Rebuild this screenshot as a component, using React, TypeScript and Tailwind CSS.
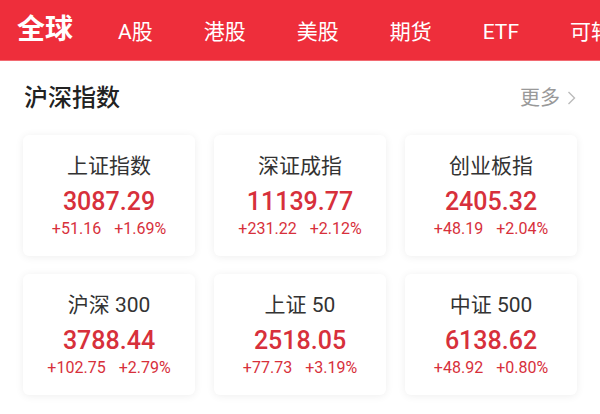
import React from 'react'

interface IIndex {
  name: string
  value: string
  change: string
  percent: string
}

const tabs = ['A股', '港股', '美股', '期货', 'ETF', '可转债']

const indices: IIndex[] = [
  { name: '上证指数', value: '3087.29', change: '+51.16', percent: '+1.69%' },
  { name: '深证成指', value: '11139.77', change: '+231.22', percent: '+2.12%' },
  { name: '创业板指', value: '2405.32', change: '+48.19', percent: '+2.04%' },
  { name: '沪深 300', value: '3788.44', change: '+102.75', percent: '+2.79%' },
  { name: '上证 50', value: '2518.05', change: '+77.73', percent: '+3.19%' },
  { name: '中证 500', value: '6138.62', change: '+48.92', percent: '+0.80%' },
]

const IndexCard: React.FC<{ item: IIndex }> = ({ item }) => (
  <div className="h-[121px] rounded-md bg-white shadow-[0_1px_8px_rgba(0,0,0,0.07)] flex flex-col items-center pt-[18px]">
    <p className="text-[21px] leading-[26px] text-[#333]">{item.name}</p>
    <p className="mt-[7px] text-[25px] leading-[32px] font-medium text-[#d7303b]">
      {item.value}
    </p>
    <p className="mt-[1px] text-[16px] leading-[20px] text-[#d7303b] flex gap-[13px]">
      <span>{item.change}</span>
      <span>{item.percent}</span>
    </p>
  </div>
)

export default function App() {
  return (
    <div
      className="w-[600px] h-[414px] overflow-hidden bg-white"
      style={{ fontFamily: 'Roboto, "Noto Sans CJK SC", sans-serif' }}
    >
      {/* top tabs */}
      <div className="h-[61px] bg-[#ee2e3b] border-b border-[#f26a72] flex items-center pl-[17px] whitespace-nowrap text-white overflow-hidden">
        <span className="text-[28px] font-bold leading-none">全球</span>
        <div className="flex items-center gap-[51px] ml-[45px] mt-[4px]">
          {tabs.map(tab => (
            <span key={tab} className="text-[21px] leading-none">
              {tab}
            </span>
          ))}
        </div>
      </div>

      {/* section header */}
      <div className="h-[74px] flex items-center justify-between px-[24px]">
        <h2 className="text-[24px] font-medium text-[#222]">沪深指数</h2>
        <div className="flex items-center gap-[7px] text-[20px] text-[#999]">
          <span>更多</span>
          <svg width="9" height="16" viewBox="0 0 9 16" fill="none">
            <path d="M1.5 2 L7.5 8 L1.5 14" stroke="#bbb" strokeWidth="1.4" />
          </svg>
        </div>
      </div>

      <div className="grid grid-cols-3 gap-x-[19px] gap-y-[18px] px-[23px]">
        {indices.map(item => (
          <IndexCard key={item.name} item={item} />
        ))}
      </div>
    </div>
  )
}
